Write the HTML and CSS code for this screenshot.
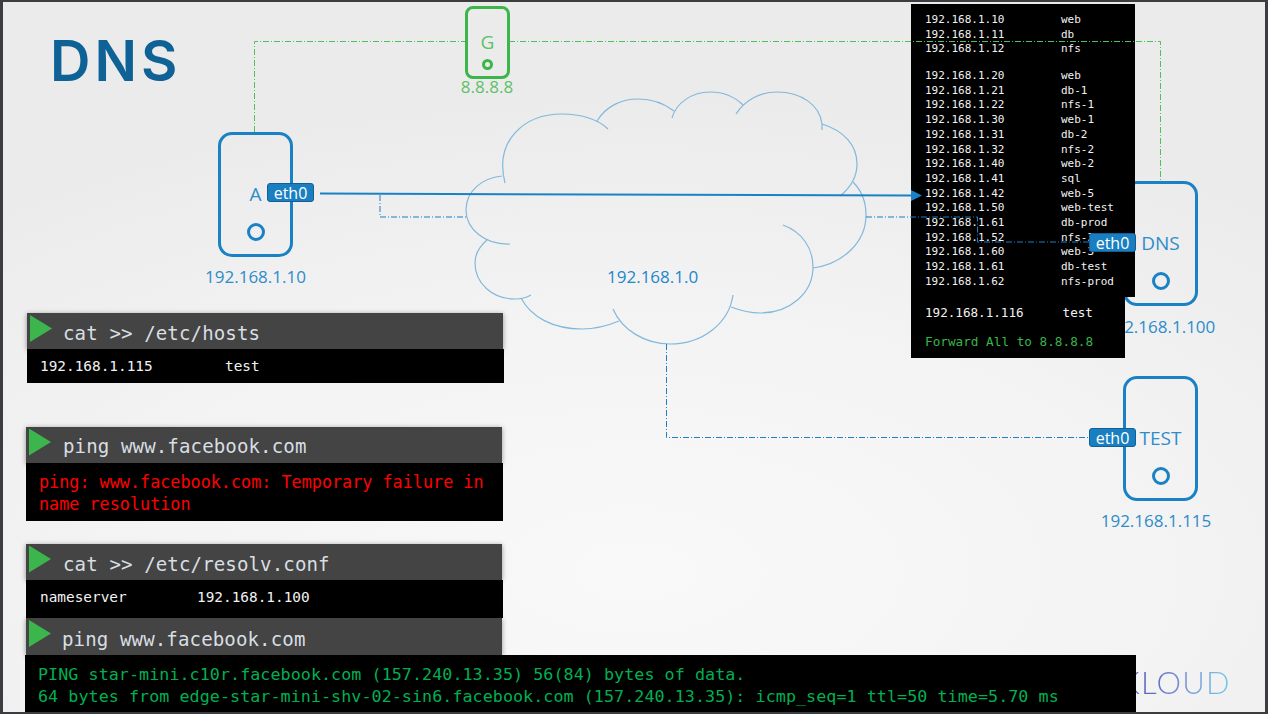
FILE: index.html
```html
<!DOCTYPE html>
<html>
<head>
    <link rel="stylesheet" href="styles.css">
</head>
<body>
    <div class="slide">
        <h1 class="title">DNS</h1>

        <div class="logo">KLOUD</div>

        <svg class="cloud" width="1268" height="714" viewBox="0 0 1268 714">
            <path d="M505 183 C494 140 525 114 562 114 C580 114 598 119 608 129"/>
            <path d="M597 121 C606 106 622 99 638 99 C652 99 665 104 674 111"/>
            <path d="M672 118 C676 103 692 92 710 92 C724 92 735 97 743 105"/>
            <path d="M736 114 C745 100 760 92 777 92 C801 92 820 105 822 124 L822 130"/>
            <path d="M822 124 C845 131 857 146 857 164 C857 177 850 188 840 196"/>
            <path d="M853 182 C862 191 866 203 866 215 C866 243 842 264 813 268"/>
            <path d="M783 225 C802 232 813 248 813 267 C813 293 790 313 760 313 C749 313 739 310 731 307"/>
            <path d="M733 295 C729 323 703 344 670 344 C645 344 622 330 613 309"/>
            <path d="M619 321 C607 326 595 329 582 329 C553 329 531 317 521 298"/>
            <path d="M531 295 C526 298 520 299 515 299 C492 299 475 283 475 263 C475 254 480 246 487 240"/>
            <path d="M510 244 C485 245 466 229 466 210 C466 191 482 178 502 176"/>
        </svg>
        <div class="net-label">192.168.1.0</div>

        <div class="node node-g">
            <div class="node-name">G</div>
            <div class="node-led"></div>
            <div class="node-ip">8.8.8.8</div>
        </div>

        <div class="node node-a">
            <div class="node-name">A</div>
            <div class="node-led"></div>
            <div class="eth">eth0</div>
            <div class="node-ip">192.168.1.10</div>
        </div>

        <div class="node node-dns">
            <div class="node-name">DNS</div>
            <div class="node-led"></div>
            <div class="eth">eth0</div>
            <div class="node-ip">192.168.1.100</div>
        </div>

        <div class="node node-test">
            <div class="node-name">TEST</div>
            <div class="node-led"></div>
            <div class="eth">eth0</div>
            <div class="node-ip">192.168.1.115</div>
        </div>

        <div class="hosts">
            <div class="hosts-main">
                <div class="hosts-group">
                    <span>192.168.1.10</span><span>web</span>
                    <span>192.168.1.11</span><span>db</span>
                    <span>192.168.1.12</span><span>nfs</span>
                </div>
                <div class="hosts-group">
                    <span>192.168.1.20</span><span>web</span>
                    <span>192.168.1.21</span><span>db-1</span>
                    <span>192.168.1.22</span><span>nfs-1</span>
                    <span>192.168.1.30</span><span>web-1</span>
                    <span>192.168.1.31</span><span>db-2</span>
                    <span>192.168.1.32</span><span>nfs-2</span>
                    <span>192.168.1.40</span><span>web-2</span>
                    <span>192.168.1.41</span><span>sql</span>
                    <span>192.168.1.42</span><span>web-5</span>
                    <span>192.168.1.50</span><span>web-test</span>
                    <span>192.168.1.61</span><span>db-prod</span>
                    <span>192.168.1.52</span><span>nfs-3</span>
                    <span>192.168.1.60</span><span>web-3</span>
                    <span>192.168.1.61</span><span>db-test</span>
                    <span>192.168.1.62</span><span>nfs-prod</span>
                </div>
            </div>
            <div class="hosts-extra">
                <div class="hosts-new"><span>192.168.1.116</span><span>test</span></div>
                <div class="hosts-forward">Forward All to 8.8.8.8</div>
            </div>
        </div>

        <svg class="wires" width="1268" height="714" viewBox="0 0 1268 714">
            <path class="wire-green" d="M254.5 132 V41.5 H465 M509 41.5 H1160.5 V181"/>
            <path class="wire-blue" d="M380 195 V217 H466 M866 217 H977.5 V242 H1090"/>
            <path class="wire-blue" d="M666.5 344 V437.5 H1090"/>
            <path class="wire-main" d="M320 193.5 L912 195.5"/>
            <path class="wire-head" d="M911 190 L922 195.5 L911 201 Z"/>
        </svg>

        <div class="terminals">
            <div class="term term-hosts">
                <div class="term-cmd">cat &gt;&gt; /etc/hosts</div>
                <div class="term-out term-out-white"><span class="col-a">192.168.1.115</span><span>test</span></div>
            </div>
            <div class="term term-fail">
                <div class="term-cmd">ping www.facebook.com</div>
                <div class="term-out term-out-red">ping: www.facebook.com: Temporary failure in name resolution</div>
            </div>
            <div class="term term-resolv">
                <div class="term-cmd">cat &gt;&gt; /etc/resolv.conf</div>
                <div class="term-out term-out-white"><span class="col-b">nameserver</span><span>192.168.1.100</span></div>
            </div>
            <div class="term term-ping">
                <div class="term-cmd">ping www.facebook.com</div>
                <div class="term-out term-out-green">PING star-mini.c10r.facebook.com (157.240.13.35) 56(84) bytes of data.<br>64 bytes from edge-star-mini-shv-02-sin6.facebook.com (157.240.13.35): icmp_seq=1 ttl=50 time=5.70 ms</div>
            </div>
        </div>
    </div>
</body>
</html>
```

FILE: styles.css
```css
* {
    box-sizing: border-box;
}

body {
    margin: 0;
    overflow: hidden;
    font-family: "Open Sans", sans-serif;
}

.slide {
    position: relative;
    width: 1268px;
    height: 714px;
    overflow: hidden;
    background: radial-gradient(ellipse 1000px 480px at 50% 80%, #f9f9f9 0%, #f3f3f3 55%, #ebebeb 100%);
    background-color: #ebebeb;
    box-shadow: inset 3px 2px 0 #3b3d40, inset -3px -2px 0 #3b3d40;
}

.title {
    position: absolute;
    left: 50px;
    top: 28px;
    margin: 0;
    font-family: Inter, sans-serif;
    font-size: 56px;
    font-weight: 600;
    line-height: 66px;
    letter-spacing: 4px;
    color: #0f6296;
}

.logo {
    position: absolute;
    left: 1120px;
    top: 661px;
    font-family: Lato, sans-serif;
    font-size: 31px;
    font-weight: 300;
    line-height: 42px;
    letter-spacing: 1.2px;
    background: linear-gradient(90deg, #5a68c0 25%, #7a94d8 60%, #78cbe8 100%);
    -webkit-background-clip: text;
    background-clip: text;
    color: transparent;
}

/* diagram */
.cloud,
.wires {
    position: absolute;
    left: 0;
    top: 0;
    fill: none;
}

.cloud path {
    stroke: #82b8dc;
    stroke-width: 1.2;
}

.wires {
    z-index: 3;
}

.wire-green {
    stroke: #4fc05c;
    stroke-width: 1;
    stroke-dasharray: 6 2 1 2;
}

.wire-blue {
    stroke: #1f7fc0;
    stroke-width: 1;
    stroke-dasharray: 6 2 1 2;
}

.wire-main {
    stroke: #1a82c4;
    stroke-width: 2;
}

.wire-head {
    fill: #1a82c4;
}

.net-label {
    position: absolute;
    left: 607px;
    top: 264px;
    font-size: 17px;
    line-height: 26px;
    color: #1d86cc;
}

.node {
    position: absolute;
    display: flex;
    flex-direction: column;
    align-items: center;
    width: 75px;
    height: 125px;
    padding-top: 46px;
    border: 3px solid #1a82c4;
    border-radius: 14px;
    color: #2e8ccb;
}

.node-a {
    left: 218px;
    top: 132px;
}

.node-dns {
    left: 1123px;
    top: 181px;
}

.node-test {
    left: 1123px;
    top: 376px;
}

.node-g {
    left: 465px;
    top: 6px;
    width: 45px;
    height: 73px;
    padding-top: 20px;
    border-color: #3cb54a;
    border-radius: 8px;
    color: #5cc168;
}

.node-name {
    height: 26px;
    font-size: 19px;
    line-height: 26px;
}

.node-led {
    width: 18px;
    height: 18px;
    margin-top: 16px;
    border: 3px solid #1a82c4;
    border-radius: 50%;
}

.node-g .node-led {
    width: 11px;
    height: 11px;
    margin-top: 4px;
    border-color: #3cb54a;
}

.node-ip {
    position: absolute;
    top: 129px;
    left: 34px;
    transform: translateX(-50%);
    font-size: 17px;
    line-height: 26px;
    white-space: nowrap;
}

.node-a .node-ip {
    left: 34.5px;
}

.node-dns .node-ip {
    top: 130px;
}

.node-g .node-ip {
    top: 65px;
    left: 19px;
}

.node-test .node-ip {
    left: 30px;
}

.eth {
    position: absolute;
    z-index: 5;
    width: 47px;
    height: 19px;
    border: 1px solid #125f97;
    border-radius: 3px;
    background: #1a7fc1;
    color: #fff;
    font-size: 16px;
    line-height: 18px;
    text-align: center;
}

.node-a .eth {
    left: 46px;
    top: 48px;
}

.node-dns .eth {
    left: -37px;
    top: 49px;
}

.node-test .eth {
    left: -37px;
    top: 49px;
}

/* hosts file */
.hosts {
    position: absolute;
    z-index: 2;
    left: 911px;
    top: 4px;
    color: #f2f2f2;
    font-family: "DejaVu Sans Mono", monospace;
}

.hosts-main {
    width: 224px;
    height: 293px;
    padding: 9px 0 0 14px;
    background: #000;
}

.hosts-group {
    display: grid;
    grid-template-columns: 136px 1fr;
    grid-auto-rows: 14.7px;
    font-size: 11px;
    line-height: 14.7px;
}

.hosts-group + .hosts-group {
    margin-top: 12px;
}

.hosts-extra {
    width: 214px;
    height: 61px;
    padding: 7px 0 0 14px;
    background: #000;
}

.hosts-new {
    display: flex;
    gap: 39px;
    font-size: 12.6px;
    line-height: 18px;
}

.hosts-forward {
    margin-top: 11px;
    color: #38b54a;
    font-size: 12.7px;
    line-height: 18px;
}

/* terminals */
.terminals {
    position: absolute;
    z-index: 4;
    left: 26px;
    top: 313px;
    display: flex;
    flex-direction: column;
    font-family: "DejaVu Sans Mono", monospace;
}

.term {
    width: 477px;
}

.term-hosts {
    margin: 0 0 44px 1px;
}

.term-fail {
    margin-bottom: 23px;
}

.term-cmd {
    display: flex;
    align-items: center;
    gap: 12px;
    width: 476px;
    height: 36px;
    padding: 4px 0 0 3px;
    background: #444;
    box-shadow: 0 1px 5px rgba(0, 0, 0, 0.4);
    color: #d8dee2;
    font-size: 19.1px;
    letter-spacing: 0.1px;
}

.term-hosts .term-cmd {
    gap: 11px;
}

.term-resolv .term-cmd,
.term-ping .term-cmd {
    padding-top: 6px;
}

.term-cmd::before {
    content: "";
    width: 22px;
    height: 27px;
    margin-top: -9px;
    background: #3cb64c;
    clip-path: polygon(0 0, 100% 50%, 0 100%);
}

.term-resolv .term-cmd::before,
.term-ping .term-cmd::before {
    margin-top: -11px;
}

.term-out {
    position: relative;
    background: #000;
    padding-left: 14px;
}

.term-out-white {
    display: flex;
    align-items: center;
    height: 33.5px;
    color: #f2f2f2;
    font-size: 14.4px;
}

.term-hosts .term-out-white {
    padding: 1px 0 0 13px;
}

.col-a {
    width: 185px;
}

.col-b {
    width: 157px;
}

.term-resolv .term-out-white {
    height: 38px;
    padding-bottom: 4px;
}

.term-out-red {
    height: 58px;
    padding: 8px 0 0 13px;
    color: #f00;
    font-size: 16.8px;
    line-height: 22px;
}

.term-ping .term-cmd {
    height: 37px;
    gap: 11px;
}

.term-out-green {
    width: 1111px;
    height: 57px;
    margin-left: -1px;
    padding: 8px 0 0 13px;
    color: #00b050;
    font-size: 16.7px;
    line-height: 22px;
    letter-spacing: 0.06px;
    white-space: nowrap;
}
```
